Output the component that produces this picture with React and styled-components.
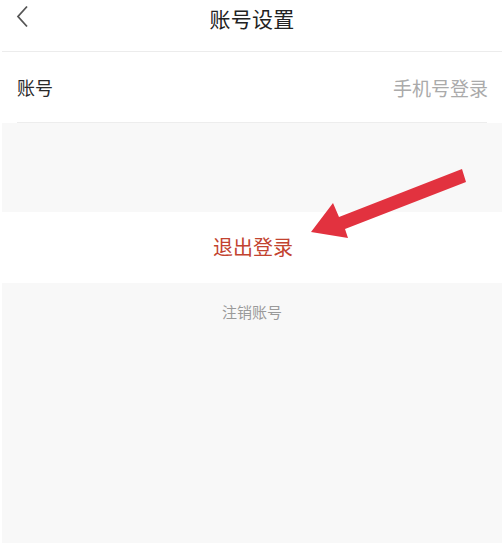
import React from 'react';
import styled, { createGlobalStyle } from 'styled-components';

const GlobalStyle = createGlobalStyle`
  html, body {
    margin: 0;
    padding: 0;
    background: #ffffff;
  }

  body {
    font-family: "Noto Sans CJK SC", "Noto Sans", sans-serif;
  }
`;

const StyledPage = styled.div`
  position: relative;
  width: 504px;
  height: 543px;
  padding: 0 2px;
  box-sizing: border-box;
  display: flex;
  flex-direction: column;
  overflow: hidden;
`;

const NavBar = styled.header`
  position: relative;
  height: 51px;
  display: flex;
  align-items: center;
  justify-content: center;
  border-bottom: 1px solid #ececec;
  background: #fff;

  .back {
    position: absolute;
    left: 13px;
    top: 5px;
  }

  h1 {
    margin: 0 0 16px;
    font-size: 21px;
    font-weight: 400;
    color: #222;
    letter-spacing: 0.3px;
  }
`;

const Row = styled.div`
  height: 70px;
  margin: 0 15px;
  display: flex;
  align-items: center;
  justify-content: space-between;
  border-bottom: 1px solid #ededed;
  box-shadow: 0 2px 2px -1px rgba(0, 0, 0, 0.03);

  .label {
    font-size: 18px;
    color: #2a2a2a;
  }

  .value {
    font-size: 19px;
    color: #aaa;
    margin-right: -1px;
  }
`;

const Spacer = styled.div`
  height: 89px;
  background: #f8f8f8;
`;

const ActionBand = styled.div`
  height: 71px;
  display: flex;
  align-items: center;
  justify-content: center;
  background: #fff;
  font-size: 20px;
  font-weight: 400;
  color: ${({ $danger }) => ($danger ? '#c2432f' : '#333')};

  span {
    margin: 0 0 3px 2px;
  }
`;

const Footer = styled.div`
  flex: 1;
  background: #f8f8f8;
  display: flex;
  justify-content: center;
  padding-top: 18px;
  font-size: 15px;
  color: #9a9a9a;
`;

const Pointer = styled.svg`
  position: absolute;
  left: 0;
  top: 0;
  pointer-events: none;
`;

const App = () => (
  <>
    <GlobalStyle />
    <StyledPage>
      <NavBar>
        <svg className="back" width="16" height="24" viewBox="0 0 16 24">
          <path d="M12 1.5 L3 11.5 L12 21.5" fill="none" stroke="#555" strokeWidth="1.8" />
        </svg>
        <h1>账号设置</h1>
      </NavBar>

      <Row>
        <span className="label">账号</span>
        <span className="value">手机号登录</span>
      </Row>

      <Spacer />

      <ActionBand $danger>
        <span>退出登录</span>
      </ActionBand>

      <Footer>注销账号</Footer>

      {/* red callout arrow pointing at the logout action */}
      <Pointer width="504" height="543" viewBox="0 0 504 543">
        <polygon
          points="462,169 466,182 345,229 348,238 311,232 333,203 339,217"
          fill="#e2323f"
        />
      </Pointer>
    </StyledPage>
  </>
);

export default App;
